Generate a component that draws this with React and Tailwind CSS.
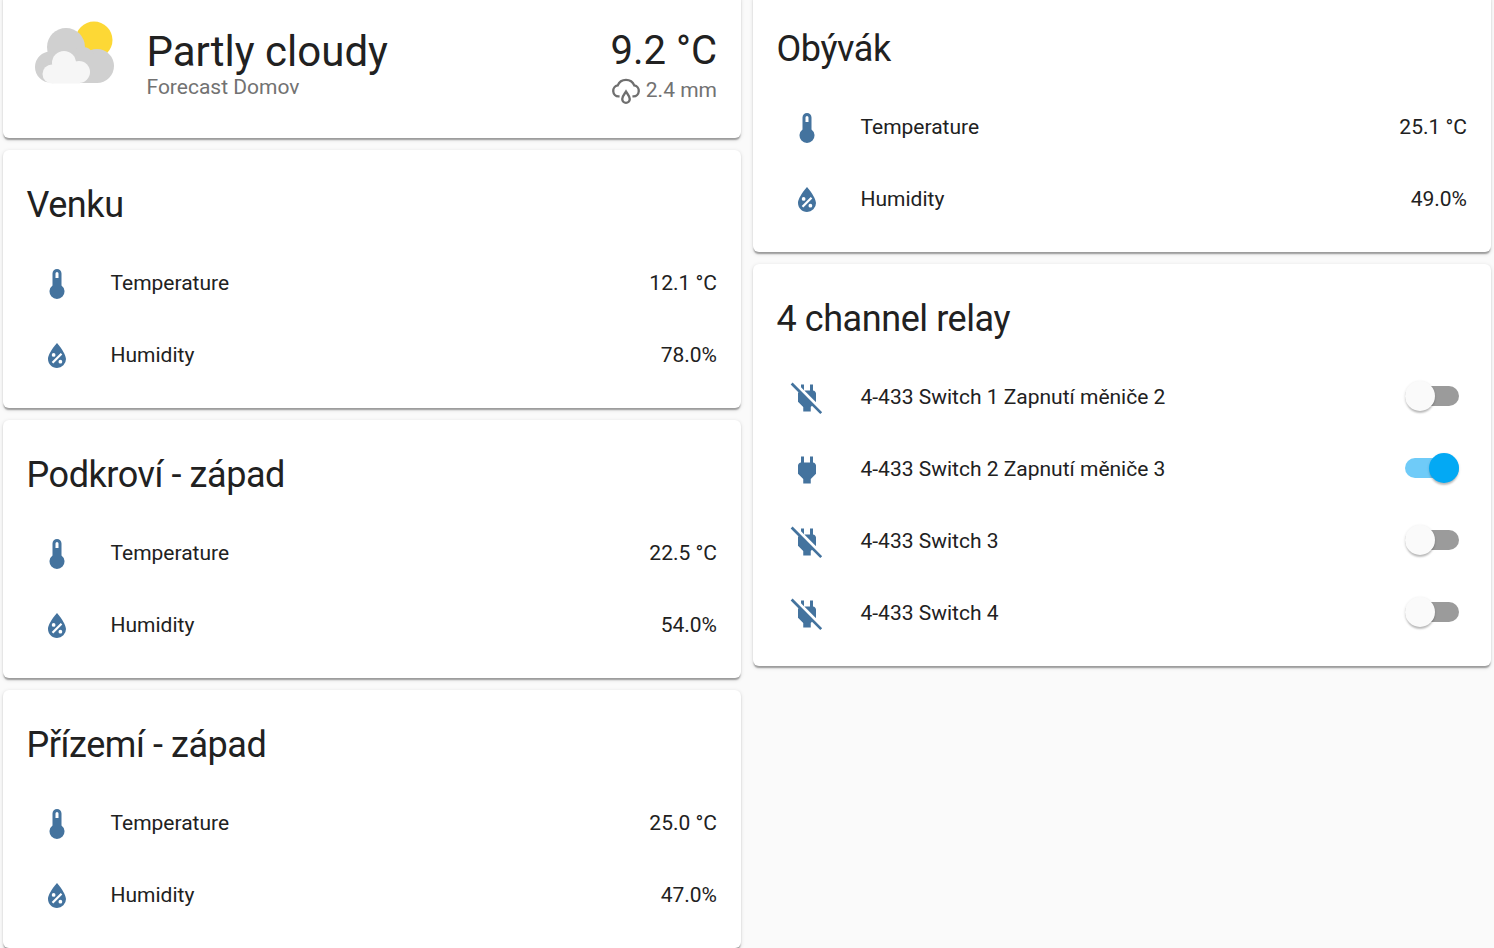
const THERMOMETER = 'M15 13V5A3 3 0 0 0 9 5V13A5 5 0 1 0 15 13M12 4A1 1 0 0 1 13 5V8H11V5A1 1 0 0 1 12 4Z'
const WATER_PERCENT = 'M12,3.25C12,3.25 6,10 6,14C6,17.32 8.69,20 12,20A6,6 0 0,0 18,14C18,10 12,3.25 12,3.25M14.47,9.97L15.53,11.03L9.53,17.03L8.47,15.97M9.75,10A1.25,1.25 0 0,1 11,11.25A1.25,1.25 0 0,1 9.75,12.5A1.25,1.25 0 0,1 8.5,11.25A1.25,1.25 0 0,1 9.75,10M14.25,14.5A1.25,1.25 0 0,1 15.5,15.75A1.25,1.25 0 0,1 14.25,17A1.25,1.25 0 0,1 13,15.75A1.25,1.25 0 0,1 14.25,14.5Z'
const PLUG = 'M16,7V3H14V7H10V3H8V7H8C7,7 6,8 6,9V14.5L9.5,18V21H14.5V18L18,14.5V9C18,8 17,7 16,7Z'
const PLUG_OFF = 'M22.11 21.46L2.39 1.73L1.11 3L6.25 8.14C6.1 8.41 6 8.7 6 9V14.5L9.5 18V21H14.5V18L15.31 17.2L20.84 22.73L22.11 21.46M18 14.5V9C18 8 17 7 16 7V3H14V7H10.2L17.85 14.65L18 14.5M10 3H8V4.8L10 6.8V3Z'

const sensorCards = [
  { title: 'Venku', temp: '12.1 °C', hum: '78.0%' },
  { title: 'Podkroví - západ', temp: '22.5 °C', hum: '54.0%' },
  { title: 'Přízemí - západ', temp: '25.0 °C', hum: '47.0%' },
]

const switches = [
  { name: '4-433 Switch 1 Zapnutí měniče 2', on: false },
  { name: '4-433 Switch 2 Zapnutí měniče 3', on: true },
  { name: '4-433 Switch 3', on: false },
  { name: '4-433 Switch 4', on: false },
]

function Card({ children }) {
  return (
    <div className="rounded-[6px] bg-white shadow-[0_3px_1.5px_-1.5px_rgba(0,0,0,0.2),0_1.5px_1.5px_0_rgba(0,0,0,0.14),0_1.5px_4.5px_0_rgba(0,0,0,0.12)]">
      {children}
    </div>
  )
}

function Mdi({ path }) {
  return (
    <svg viewBox="0 0 24 24" className="h-9 w-9 fill-[#44739e]">
      <path d={path} />
    </svg>
  )
}

function Row({ icon, name, children }) {
  return (
    <div className="flex h-[60px] items-center">
      <div className="flex w-[60px] shrink-0 justify-center">
        <Mdi path={icon} />
      </div>
      <div className="ml-[23.5px] flex-1 text-[21px] text-[#212121]">{name}</div>
      {children}
    </div>
  )
}

function Title({ children }) {
  return (
    <div className="pt-[31px] pr-6 pb-[25px] pl-[23.5px] text-[36px] leading-[48px] tracking-[-0.012em] text-[#212121]">
      {children}
    </div>
  )
}

function Value({ children }) {
  return <div className="text-[21px] text-[#212121]">{children}</div>
}

function SensorCard({ title, temp, hum }) {
  return (
    <Card>
      <Title>{title}</Title>
      <div className="flex flex-col gap-3 px-6 pb-[22px]">
        <Row icon={THERMOMETER} name="Temperature">
          <Value>{temp}</Value>
        </Row>
        <Row icon={WATER_PERCENT} name="Humidity">
          <Value>{hum}</Value>
        </Row>
      </div>
    </Card>
  )
}

function Toggle({ on }) {
  return (
    <div className="relative mr-2 mb-1 h-5 w-[54px]">
      <div className={on ? 'h-full rounded-full bg-[#6fcbf8]' : 'h-full rounded-full bg-[#9b9b9b]'} />
      <div
        className={
          on
            ? 'absolute top-[-5px] right-0 h-[30px] w-[30px] rounded-full bg-[#03a9f4] shadow-[0_3px_2px_-1px_rgba(0,0,0,0.2),0_1px_3px_0_rgba(0,0,0,0.14)]'
            : 'absolute top-[-5px] left-0 h-[30px] w-[30px] rounded-full bg-[#fafafa] shadow-[0_3px_2px_-1px_rgba(0,0,0,0.2),0_1px_3px_0_rgba(0,0,0,0.14)]'
        }
      />
    </div>
  )
}

function WeatherIcon() {
  return (
    <svg viewBox="26 14 96 80" className="mr-[23.5px] h-20 w-24 shrink-0">
      <circle cx="93" cy="40" r="18.5" fill="#fdd835" />
      <g fill="#d0d0d0">
        <circle cx="65" cy="47" r="19" />
        <circle cx="49.5" cy="67" r="15.5" />
        <circle cx="96" cy="66" r="17" />
        <circle cx="82" cy="58" r="11" />
        <rect x="50" y="60" width="47" height="23" />
      </g>
      <g fill="#f6f6f6">
        <circle cx="63" cy="63" r="12" />
        <circle cx="51" cy="74" r="9.5" />
        <circle cx="78" cy="72" r="11" />
        <rect x="51" y="68" width="28" height="15.5" />
      </g>
    </svg>
  )
}

function RainIcon() {
  return (
    <svg viewBox="0 0 28 28" className="h-[30px] w-[30px] fill-none stroke-[#6f6f6f] stroke-[2.2]">
      <path d="M8 20H7A5.2 5.2 0 0 1 6.3 9.7 8.3 8.3 0 0 1 21.7 9.7 5.2 5.2 0 0 1 21 20H20" />
      <path d="M14 15.5C12.5 18 10.5 19.5 10.5 22.5A3.5 3.5 0 0 0 17.5 22.5C17.5 19.5 15.5 18 14 15.5Z" />
    </svg>
  )
}

function WeatherCard() {
  return (
    <Card>
      <div className="flex h-[144px] items-start justify-between px-6 pt-5">
        <div className="flex">
          <WeatherIcon />
          <div>
            <div className="mt-[13px] text-[42px] leading-[50px] text-[#212121]">Partly cloudy</div>
            <div className="mt-[-2px] text-[21px] leading-[24px] text-[#727272]">Forecast Domov</div>
          </div>
        </div>
        <div className="flex flex-col items-end">
          <div className="mt-3 text-[40px] leading-[50px] text-[#212121]">9.2 °C</div>
          <div className="flex h-7 items-center gap-[5px] text-[21px] leading-[28px] text-[#727272]">
            <RainIcon />
            2.4 mm
          </div>
        </div>
      </div>
    </Card>
  )
}

export default function App() {
  return (
    <div className="h-[948px] overflow-hidden bg-[#fafafa] font-['Roboto',sans-serif]">
      <div className="mt-[-6px] grid grid-cols-2 gap-3 px-[3px]">
        <div className="flex flex-col gap-3">
          <WeatherCard />
          {sensorCards.map((c) => (
            <SensorCard key={c.title} {...c} />
          ))}
        </div>
        <div className="flex flex-col gap-3">
          <SensorCard title="Obývák" temp="25.1 °C" hum="49.0%" />
          <Card>
            <Title>4 channel relay</Title>
            <div className="flex flex-col gap-3 px-6 pb-[22px]">
              {switches.map((s) => (
                <Row key={s.name} icon={s.on ? PLUG : PLUG_OFF} name={s.name}>
                  <Toggle on={s.on} />
                </Row>
              ))}
            </div>
          </Card>
        </div>
      </div>
    </div>
  )
}
